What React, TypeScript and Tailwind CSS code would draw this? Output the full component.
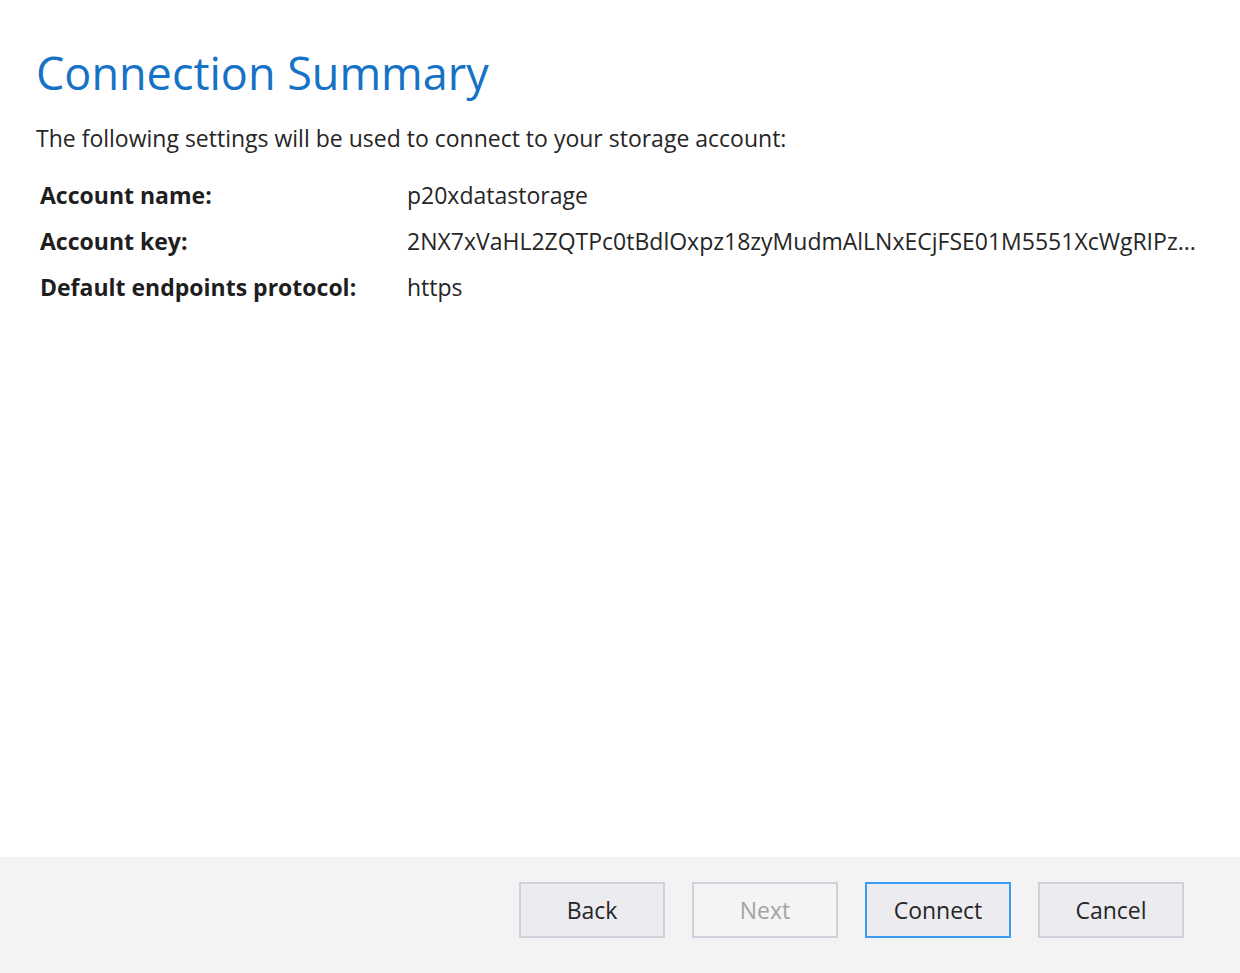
const fontStack = "font-['Open_Sans','Noto_Sans',sans-serif]"

const rows = [
  { label: 'Account name:', value: 'p20xdatastorage' },
  { label: 'Account key:', value: '2NX7xVaHL2ZQTPc0tBdlOxpz18zyMudmAlLNxECjFSE01M5551XcWgRIPz...' },
  { label: 'Default endpoints protocol:', value: 'https' },
]

function WizardButton({ label, primary = false, disabled = false }: { label: string; primary?: boolean; disabled?: boolean }) {
  const tone = disabled
    ? 'border-[#cfd0dc] bg-[#f4f4f5] text-[#a3a3a3]'
    : primary
      ? 'border-[#3b9cf5] bg-[#ebebf0] text-[#262626]'
      : 'border-[#cfd0dc] bg-[#ebebf0] text-[#262626]'
  return (
    <button type="button" disabled={disabled} className={`h-[56px] w-[146px] border-2 text-[23px] ${tone}`}>
      {label}
    </button>
  )
}

export default function App() {
  return (
    <div className={`flex h-[973px] w-[1240px] flex-col bg-white ${fontStack}`}>
      <main className="flex-1 px-[36px] pt-[42px]">
        <h1 className="text-[45px] leading-[62px] font-normal text-[#1672c6]">Connection Summary</h1>
        <p className="mt-[19px] text-[23px] leading-[30px] text-[#262626]">
          The following settings will be used to connect to your storage account:
        </p>
        <dl className="mt-[27px] grid grid-cols-[367px_1fr] gap-y-[16px] pl-[4px]">
          {rows.map((row) => (
            <div key={row.label} className="contents">
              <dt className="text-[23px] leading-[30px] font-bold text-[#1e1e1e]">{row.label}</dt>
              <dd className="text-[23px] leading-[30px] text-[#262626] whitespace-nowrap">{row.value}</dd>
            </div>
          ))}
        </dl>
      </main>
      <footer className="flex h-[116px] items-start justify-end gap-[27px] bg-[#f3f3f3] pr-[56px] pt-[25px]">
        <WizardButton label="Back" />
        <WizardButton label="Next" disabled />
        <WizardButton label="Connect" primary />
        <WizardButton label="Cancel" />
      </footer>
    </div>
  )
}
